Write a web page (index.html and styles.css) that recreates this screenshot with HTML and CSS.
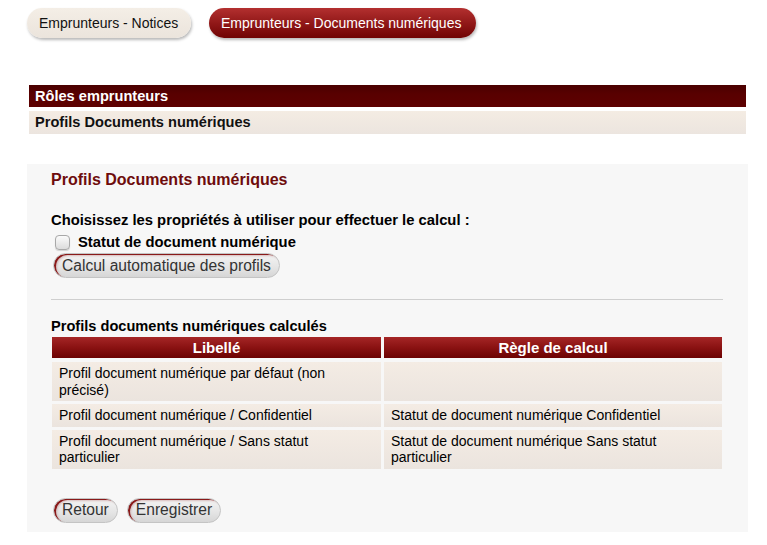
FILE: index.html
```html
<!DOCTYPE html>
<html lang="fr">
<head>
<meta charset="utf-8">
<title>Profils Documents numériques</title>
<link rel="stylesheet" href="styles.css">
</head>
<body>
<nav class="tabs">
  <a class="tab tab-light" href="#">Emprunteurs - Notices</a>
  <a class="tab tab-active" href="#">Emprunteurs - Documents numériques</a>
</nav>
<div class="bars">
  <div class="bar bar-dark">Rôles emprunteurs</div>
  <div class="bar bar-light">Profils Documents numériques</div>
</div>
<section class="panel">
  <h1 class="panel-title">Profils Documents numériques</h1>
  <p class="choose">Choisissez les propriétés à utiliser pour effectuer le calcul :</p>
  <label class="check-row"><input type="checkbox" class="check"><span>Statut de document numérique</span></label>
  <div class="calc-row"><button class="btn">Calcul automatique des profils</button></div>
  <hr class="sep">
  <h2 class="sub-title">Profils documents numériques calculés</h2>
  <table class="grid">
    <thead>
      <tr><th class="col1">Libellé</th><th>Règle de calcul</th></tr>
    </thead>
    <tbody>
      <tr><td>Profil document numérique par défaut (non précisé)</td><td></td></tr>
      <tr><td>Profil document numérique / Confidentiel</td><td>Statut de document numérique Confidentiel</td></tr>
      <tr><td>Profil document numérique / Sans statut particulier</td><td>Statut de document numérique Sans statut particulier</td></tr>
    </tbody>
  </table>
  <div class="actions">
    <button class="btn">Retour</button>
    <button class="btn">Enregistrer</button>
  </div>
</section>
</body>
</html>
```
FILE: styles.css
```css
html, body {
  margin: 0;
  padding: 0;
  background: #ffffff;
  font-family: "Liberation Sans", Arial, sans-serif;
  color: #000;
}

.tabs {
  display: flex;
  gap: 18px;
  padding: 8px 0 0 27px;
}

.tab {
  display: block;
  height: 30px;
  line-height: 31px;
  padding: 0 12px;
  border-radius: 16px;
  font-size: 14px;
  text-decoration: none;
  box-shadow: 1px 2px 3px rgba(0, 0, 0, 0.28);
}

.tab-light {
  width: 140px;
  color: #111;
  background: linear-gradient(#f4eee6, #ebe4dc);
}

.tab-active {
  width: 243px;
  color: #fff;
  background: linear-gradient(#b3302f, #8e1616 55%, #700404);
}

.bars {
  margin: 47px 0 0 29px;
  width: 717px;
}

.bar {
  font-size: 14.6px;
  font-weight: bold;
  padding-left: 6px;
}

.bar-dark {
  height: 22px;
  line-height: 23px;
  color: #fff;
  background: linear-gradient(#4a0000, #580000 40%, #5e0000);
}

.bar-light {
  margin-top: 4px;
  height: 23px;
  line-height: 23px;
  color: #111;
  background: linear-gradient(#f4ece3, #ece5df);
}

.panel {
  margin: 30px 0 0 27px;
  width: 721px;
  box-sizing: border-box;
  padding: 6px 25px 9px 24px;
  background: #f7f7f7;
}

.panel-title {
  margin: 0;
  font-size: 16px;
  line-height: 20px;
  color: #6e0c0c;
}

.choose {
  margin: 21px 0 0;
  font-size: 14.8px;
  line-height: 18px;
  font-weight: bold;
}

.check-row {
  display: flex;
  align-items: center;
  gap: 8px;
  margin: 3px 0 0 4px;
  height: 20px;
  font-size: 14.8px;
  font-weight: bold;
}

.check {
  appearance: none;
  -webkit-appearance: none;
  margin: 0;
  width: 15px;
  height: 15px;
  border: 1px solid #a8a8a8;
  border-radius: 4px;
  background: linear-gradient(#fbfbfb, #dcdcdc);
  box-shadow: 0 1px 1px rgba(0, 0, 0, 0.15);
}

.calc-row {
  margin-top: 1px;
  padding-left: 2px;
}

.btn {
  height: 25px;
  padding: 0 8px;
  border: 1px solid #c4c4c4;
  border-radius: 13px;
  background: linear-gradient(#f4f4f4, #e4e4e4 60%, #d6d6d6);
  box-shadow: inset 2px 1px 0 #8a1a1a, inset 3px 2px 2px rgba(140, 30, 30, 0.25);
  font-family: "Liberation Sans", Arial, sans-serif;
  font-size: 15.6px;
  color: #333;
  margin: 0;
}

.sep {
  margin: 21px 0 0;
  border: 0;
  border-top: 1px solid #cfcfcf;
  height: 0;
}

.sub-title {
  margin: 18px 0 0;
  font-size: 14.6px;
  line-height: 16px;
}

.grid {
  margin: 0 0 0 -2px;
  width: 676px;
  border-collapse: separate;
  border-spacing: 3px;
  font-size: 14px;
}

.grid th {
  height: 21px;
  padding: 0;
  color: #fff;
  font-size: 15px;
  font-weight: bold;
  text-align: center;
  background: linear-gradient(#a52626, #8a1212 50%, #6c0202);
}

.grid th.col1 {
  width: 329px;
}

.grid td {
  padding: 3px 16px 3px 7px;
  line-height: 16.5px;
  vertical-align: middle;
  background: linear-gradient(#f4ece4, #ebe4de);
}

.grid tbody tr:first-child td {
  border-top: 1px solid #f7f7f7;
}

.actions {
  display: flex;
  gap: 9px;
  margin-top: 26px;
  padding-left: 2px;
}
```
